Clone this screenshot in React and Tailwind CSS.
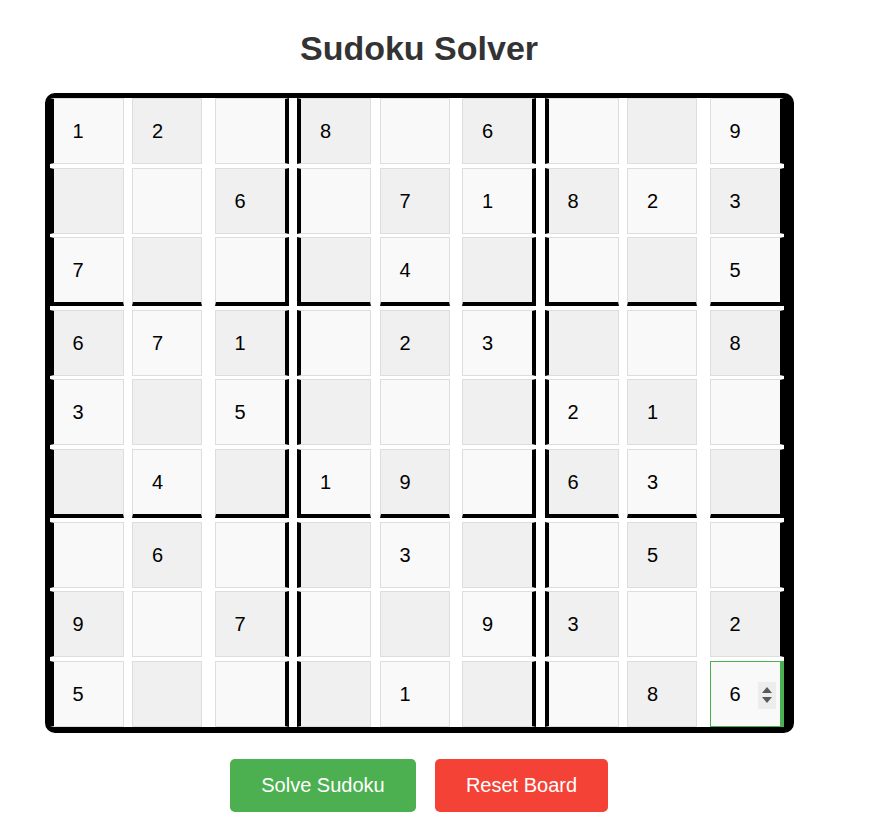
const board = [
	[1, 2, 0, 8, 0, 6, 0, 0, 9],
	[0, 0, 6, 0, 7, 1, 8, 2, 3],
	[7, 0, 0, 0, 4, 0, 0, 0, 5],
	[6, 7, 1, 0, 2, 3, 0, 0, 8],
	[3, 0, 5, 0, 0, 0, 2, 1, 0],
	[0, 4, 0, 1, 9, 0, 6, 3, 0],
	[0, 6, 0, 0, 3, 0, 0, 5, 0],
	[9, 0, 7, 0, 0, 9, 3, 0, 2],
	[5, 0, 0, 0, 1, 0, 0, 8, 6]
]

const Spinner = () => (
	<div className="absolute left-[47px] top-[20px] flex h-[27px] w-[18px] flex-col items-center justify-center gap-[4px] bg-[#ededed]">
		<svg width="10" height="6" viewBox="0 0 10 6">
			<path d="M5 0 L10 6 L0 6 Z" fill="#5a5a5a" />
		</svg>
		<svg width="10" height="6" viewBox="0 0 10 6">
			<path d="M0 0 L10 0 L5 6 Z" fill="#5a5a5a" />
		</svg>
	</div>
)

const Cell = ({ value, r, c }) => {
	const focused = r === 8 && c === 8
	const width = c % 3 === 1 ? 'w-[70px]' : 'w-[74px]'
	const height = r % 3 === 2 && r !== 8 ? 'h-[69px] border-b-4 border-b-black' : 'h-[66px]'
	const left = c % 3 === 0 ? 'border-l-4 border-l-black' : ''
	const right = c % 3 === 2 ? 'border-r-4 border-r-black' : ''
	const bg = (r * 9 + c) % 2 === 1 ? 'bg-[#f0f0f0]' : 'bg-[#f9f9f9]'

	if (focused) {
		return (
			<div className="relative flex h-[66px] w-[74px] items-center border border-r-4 border-[#4caf50] bg-[#f9f9f9] pl-[19px] text-[20px] text-black">
				{value}
				<Spinner />
			</div>
		)
	}

	return (
		<div className={`flex items-center border border-[#ddd] pl-[19px] text-[20px] text-black ${width} ${height} ${left} ${right} ${bg}`}>
			{value ? value : ''}
		</div>
	)
}

const App = () => {
	return (
		<div className="flex w-[838px] flex-col items-center bg-white pt-[28px] font-['Liberation_Sans',Arial,sans-serif]">
			<h1 className="text-[34px] font-bold leading-[40px] text-[#333]">Sudoku Solver</h1>

			<div className="mt-[25px] rounded-[10px] border-[5px] border-b-[6px] border-r-[10px] border-black">
				<div className="grid grid-cols-[repeat(8,82.5px)_74px] gap-y-[3.6px]">
					{board.map((row, r) =>
						row.map((value, c) => <Cell key={`${r}-${c}`} value={value} r={r} c={c} />)
					)}
				</div>
			</div>

			<div className="mt-[26px] flex gap-[19px]">
				<button className="h-[53px] w-[186px] rounded-[5px] bg-[#4caf50] text-[20px] text-white">Solve Sudoku</button>
				<button className="h-[53px] w-[173px] rounded-[5px] bg-[#f44336] text-[20px] text-white">Reset Board</button>
			</div>
		</div>
	)
}

export default App
